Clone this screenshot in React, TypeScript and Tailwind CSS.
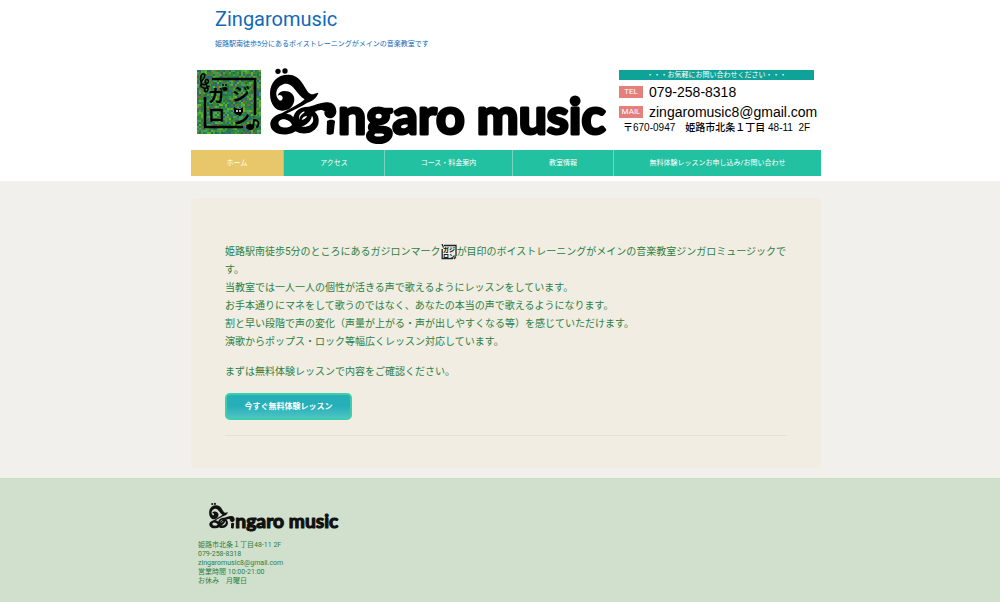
import React from "react";

const navItems = [
  { label: "ホーム", active: true },
  { label: "アクセス" },
  { label: "コース・料金案内" },
  { label: "教室情報" },
  { label: "無料体験レッスンお申し込み/お問い合わせ" },
];

const speckleColors = ["#2f8a35", "#277038", "#46a83c", "#2f7a4c", "#62b02c", "#2a7a5a", "#3c8a2f", "#35607f", "#3aa05a", "#7d6a3a", "#2f8440", "#4a9a40"];

const speckles = Array.from({ length: 32 * 32 }, (_, i) => {
  const n = Math.abs(Math.sin(i * 12.9898 + 4.1) * 43758.5453);
  return speckleColors[Math.floor((n - Math.floor(n)) * speckleColors.length)];
});

function Stamp() {
  return (
    <svg viewBox="0 0 64 64" className="h-16 w-16 shrink-0" role="img" aria-label="ガジロン">
      <rect width="64" height="64" fill="#2f7d3a" />
      {speckles.map((c, i) => (
        <rect key={i} x={(i % 32) * 2} y={Math.floor(i / 32) * 2} width="2" height="2" fill={c} />
      ))}
      <g fill="none" stroke="#000" strokeWidth="2.6" strokeLinecap="round">
        <path d="M16 9H58V44" />
        <path d="M8 28V57H45" />
        <path strokeWidth="1.6" d="M9 14C4 17 3 10 4 6C6 2 9 4 7 8L4 12M9 14C14 12 10 7 8 11L11 19C11 23 6 22 8 19M4 14C3 18 10 20 12 16" />
        <path strokeWidth="1.8" d="M56 57L57 50C63 50 62 55 60 57" />
      </g>
      <ellipse cx="53" cy="57" rx="4" ry="3" />
      <g fontFamily="'Noto Sans CJK JP', sans-serif" fontWeight="700">
        <text x="11" y="32" fontSize="17">ガ</text>
        <text x="35" y="31" fontSize="18">ジ</text>
        <text x="11" y="51" fontSize="17">ロ</text>
        <text x="36" y="54" fontSize="17">ン</text>
      </g>
      <ellipse cx="28" cy="19" rx="2.5" ry="2" />
      <circle cx="26" cy="15" r="1" />
      <circle cx="29" cy="15" r="1" />
      <path d="M37 37L40 39H43L46 37V42C45 46 38 46 37 42Z" />
      <circle cx="40" cy="41" r="1" fill="#fff" />
      <circle cx="43" cy="41" r="1" fill="#fff" />
    </svg>
  );
}

function SmallStamp() {
  return (
    <svg viewBox="0 0 16 16" className="inline-block h-4 w-4 align-middle" role="img" aria-label="ガジロン">
      <path fill="none" stroke="#222" strokeWidth="1.3" d="M3 1.5H15V12M1.2 5V14.6H12M1 0L2.5 3.5M13 15L15 12.5" />
      <g fontFamily="'Noto Sans CJK JP', sans-serif" fontWeight="900" fontSize="6" fill="#222">
        <text x="2" y="8">ガ</text>
        <text x="8" y="8">ジ</text>
        <text x="2" y="14">ロ</text>
        <text x="8" y="14">ン</text>
      </g>
    </svg>
  );
}

function Logo({ className, color }: { className: string; color: string }) {
  return (
    <svg viewBox="0 0 340 82" className={className} role="img" aria-label="Zingaro music" fill={color} stroke={color}>
      <g transform="translate(0 1) scale(.3333)" stroke="none">
        <circle cx="33" cy="19" r="8" />
        <circle cx="54" cy="18" r="8" />
        <path
          fillRule="evenodd"
          d="M154 84C146 82 139 90 131 87C112 78 107 30 65 29C32 28 9 51 9 86C9 117 25 136 45 137C67 138 82 122 82 103C82 88 69 78 53 78C42 78 34 83 32 92C39 88 46 91 47 98C47 105 42 109 36 105C29 98 25 86 30 75C35 62 48 55 60 56C80 58 88 86 113 103C98 117 73 129 44 145C22 151 9 163 10 180C12 202 38 211 61 208C71 207 79 203 86 199C111 213 146 204 154 177C158 160 152 147 143 141C153 134 164 132 173 139C169 148 177 160 188 160C201 160 209 148 208 138C207 120 195 111 179 112C157 113 145 121 126 125C101 124 82 138 79 157C74 150 69 147 58 146C86 132 109 121 121 113C139 108 150 96 154 84ZM46 163C60 162 72 170 75 180C67 187 58 189 47 187C32 184 29 167 46 163ZM112 143C104 147 97 154 98 165C94 156 97 144 112 139ZM135 152C144 165 136 180 121 184C114 186 108 186 104 184C116 181 131 171 135 152ZM121 153C117 160 111 164 104 165C106 157 112 153 121 153Z"
        />
        <path d="M180 169C185 163 201 163 204 169L200 205C196 211 183 210 179 206Z" />
      </g>
      <text x="71" y="70" fontFamily="Lato, sans-serif" fontWeight="700" fontSize="50" strokeWidth="3" strokeLinejoin="round">
        ngaro music
      </text>
    </svg>
  );
}

function ContactRow({ tag, children }: { tag: string; children: React.ReactNode }) {
  return (
    <div className="flex h-5 items-center gap-1.5">
      <span className="flex h-3 w-6 items-center justify-center bg-[#e57f7c] text-[8px] text-white">{tag}</span>
      <span className="whitespace-nowrap font-['Liberation_Sans',sans-serif] text-[14px] leading-5 text-black">{children}</span>
    </div>
  );
}

export default function App() {
  return (
    <div lang="ja" className="flex min-h-screen flex-col bg-[#f1f0ec] font-[Roboto,'Noto_Sans_CJK_JP',sans-serif]">
      <header className="bg-white pb-[5px] pl-3">
        <div className="mx-auto max-w-[630px]">
          <div className="px-6 pt-1.5 text-[#1269b8]">
            <h1 className="text-[20px] leading-[26px]">Zingaromusic</h1>
            <p className="mt-1.5 text-[7px] leading-3">姫路駅南徒歩5分にあるボイストレーニングがメインの音楽教室です</p>
          </div>
          <div className="mt-3 flex items-start pb-1 pl-1.5 pt-0.5">
            <div className="pt-1.5">
              <Stamp />
            </div>
            <Logo className="ml-1.5 h-[82px] w-[340px] shrink-0" color="#000" />
            <div className="ml-3 pt-1.5">
              <p className="flex h-2.5 w-[195px] items-center justify-center bg-[#0fa298] text-[7px] text-white">・・・お気軽にお問い合わせください・・・</p>
              <div className="pt-0.5">
                <ContactRow tag="TEL">079-258-8318</ContactRow>
                <ContactRow tag="MAIL">zingaromusic8@gmail.com</ContactRow>
              </div>
              <p className="whitespace-pre pl-1 font-['Liberation_Sans','Noto_Sans_CJK_JP',sans-serif] text-[10px] font-medium leading-3 text-black">〒670-0947　姫路市北条１丁目 48-11  2F</p>
            </div>
          </div>
          <nav className="grid grid-cols-[93fr_101fr_128fr_101fr_207fr] divide-x divide-[#7bd3be] bg-[#21c1a1]">
            {navItems.map((item) => (
              <a
                key={item.label}
                href="#"
                className={
                  item.active
                    ? "flex h-[26px] items-center justify-center bg-[#e8c76b] text-[7px] text-white"
                    : "flex h-[26px] items-center justify-center text-[7px] text-white"
                }
              >
                {item.label}
              </a>
            ))}
          </nav>
        </div>
      </header>

      <main className="pb-2.5 pl-3 pt-[17px]">
        <section className="mx-auto max-w-[630px] rounded bg-[#f1ede2] px-[34px] pb-8 pt-[45px] text-[10px] leading-[18px] text-[#2b8045]">
          <p>
            姫路駅南徒歩5分のところにあるガジロンマーク
            <SmallStamp />
            が目印のボイストレーニングがメインの音楽教室ジンガロミュージックです。
            <br />
            当教室では一人一人の個性が活きる声で歌えるようにレッスンをしています。
            <br />
            お手本通りにマネをして歌うのではなく、あなたの本当の声で歌えるようになります。
            <br />
            割と早い段階で声の変化（声量が上がる・声が出しやすくなる等）を感じていただけます。
            <br />
            演歌からポップス・ロック等幅広くレッスン対応しています。
          </p>
          <p className="mt-3">まずは無料体験レッスンで内容をご確認ください。</p>
          <a
            href="#"
            className="mt-3 flex h-[27px] w-[127px] items-center justify-center rounded-[5px] border-2 border-[#3bd0a9] bg-linear-to-b from-[#27afb9] from-50% to-[#4cc4c4] text-[8px] font-bold text-white"
          >
            今すぐ無料体験レッスン
          </a>
          <hr className="mt-[15px] border-[#e5e1d6]" />
        </section>
      </main>

      <footer className="grow border-t border-[#c8dcc4] bg-[#d1e0cd] pl-3">
        <div className="mx-auto max-w-[630px] px-[7px] pb-1 pt-[22px]">
          <Logo className="ml-2.5 h-8 w-[131px]" color="#111" />
          <address className="mt-2 text-[7px] not-italic leading-[9px] text-[#2b8045]">
            姫路市北条１丁目48-11 2F
            <br />
            079-258-8318
            <br />
            zingaromusic8@gmail.com
            <br />
            営業時間 10:00-21:00
            <br />
            お休み　月曜日
          </address>
        </div>
      </footer>
    </div>
  );
}
